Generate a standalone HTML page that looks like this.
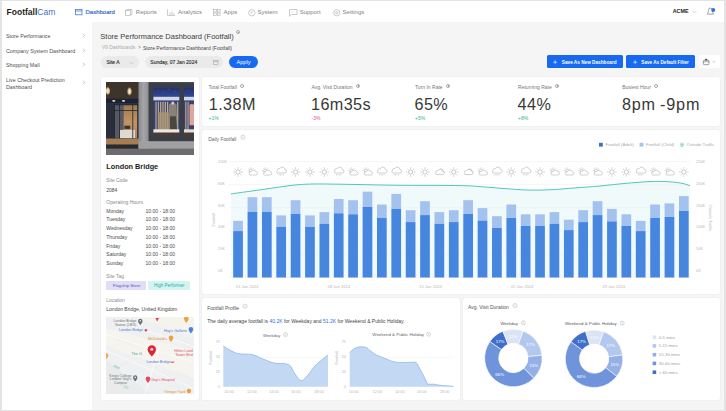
<!DOCTYPE html>
<html><head><meta charset="utf-8">
<style>
*{box-sizing:border-box;margin:0;padding:0}
html,body{width:726px;height:411px;overflow:hidden;background:#e4e4e4;font-family:"Liberation Sans",sans-serif;color:#333;position:relative}
.a{position:absolute;white-space:nowrap;line-height:1}
#mainbg{position:absolute;left:2px;top:1px;width:722px;height:409px;background:#f5f5f5}
#hdr{position:absolute;left:2px;top:1px;width:722px;height:21px;background:#fff}
#side{position:absolute;left:2px;top:22px;width:90px;height:388px;background:#fff}
.card{position:absolute;background:#fff;border-radius:2px;box-shadow:0 0 0 0.5px #ececec}
.nav{font-size:6px;color:#828282;top:8.8px}
.sb{font-size:5.3px;color:#4e4e4e;left:6px}
.lbl{font-size:5px;color:#777}
.big{font-size:16.2px;color:#383838;letter-spacing:0.4px}
.info{position:absolute;width:4.4px;height:4.4px;border:0.5px solid #aaa;border-radius:50%}
.info:after{content:"";position:absolute;left:1.25px;top:0.9px;width:0.5px;height:1.7px;background:#aaa}
.oh{font-size:5px;color:#4a4a4a}
</style></head><body>
<div id="mainbg"></div>
<div id="hdr"></div>
<div id="side"></div>

<!-- header -->
<div class="a" style="left:6.6px;top:7.9px;font-size:8.5px;font-weight:bold;color:#1e1e1e">Footfall<span style="color:#3d6fcf;font-weight:normal">Cam</span></div>
<svg class="a" style="left:74.5px;top:8.8px" width="8" height="7" viewBox="0 0 8 7"><rect x="0.5" y="0.5" width="6.5" height="5.3" fill="none" stroke="#4a7ad6" stroke-width="0.8"/><line x1="0.5" y1="2" x2="7" y2="2" stroke="#4a7ad6" stroke-width="0.8"/></svg>
<div class="a nav" style="left:85.5px;color:#3e6dd0;-webkit-text-stroke:0.2px #3e6dd0">Dashboard</div>
<svg class="a" style="left:124.5px;top:8.8px" width="8" height="7" viewBox="0 0 8 7"><rect x="0.5" y="1.5" width="5" height="5" fill="none" stroke="#aaa" stroke-width="0.6"/><path d="M2 1.5V0.5h5v5H5.5" fill="none" stroke="#aaa" stroke-width="0.6"/></svg>
<div class="a nav" style="left:135.8px">Reports</div>
<svg class="a" style="left:166.5px;top:8.8px" width="9" height="7" viewBox="0 0 9 7"><path d="M0.5 0.5V6.5H8" fill="none" stroke="#aaa" stroke-width="0.6"/><path d="M3 6V3.5M5 6V2.5M7 6V4" stroke="#aaa" stroke-width="0.6"/></svg>
<div class="a nav" style="left:177.9px">Analytics</div>
<svg class="a" style="left:212.5px;top:8.8px" width="8" height="7" viewBox="0 0 8 7"><rect x="0.5" y="0.5" width="2.8" height="2.5" fill="none" stroke="#aaa" stroke-width="0.6"/><rect x="4.3" y="0.5" width="2.8" height="2.5" fill="none" stroke="#aaa" stroke-width="0.6"/><rect x="0.5" y="4" width="2.8" height="2.5" fill="none" stroke="#aaa" stroke-width="0.6"/><rect x="4.3" y="4" width="2.8" height="2.5" fill="none" stroke="#aaa" stroke-width="0.6"/></svg>
<div class="a nav" style="left:223.6px">Apps</div>
<svg class="a" style="left:247.5px;top:8.6px" width="8" height="8" viewBox="0 0 8 8"><circle cx="3.8" cy="3.8" r="3.2" fill="none" stroke="#aaa" stroke-width="0.6"/><path d="M3.8 2v2h-1.3" fill="none" stroke="#aaa" stroke-width="0.6"/></svg>
<div class="a nav" style="left:257.5px">System</div>
<svg class="a" style="left:289px;top:8.6px" width="9" height="8" viewBox="0 0 9 8"><path d="M0.5 0.5h7.5v5h-5.5l-2 1.8z" fill="none" stroke="#aaa" stroke-width="0.6"/><path d="M2.5 3h0.6M4.5 3h0.6" stroke="#aaa" stroke-width="0.6"/></svg>
<div class="a nav" style="left:299.7px">Support</div>
<svg class="a" style="left:332.5px;top:8.6px" width="8" height="8" viewBox="0 0 8 8"><circle cx="3.8" cy="3.8" r="3.1" fill="none" stroke="#aaa" stroke-width="0.6"/><circle cx="3.8" cy="3.8" r="1.1" fill="none" stroke="#aaa" stroke-width="0.6"/></svg>
<div class="a nav" style="left:342.6px">Settings</div>
<div class="a" style="left:672.7px;top:9.1px;font-size:5.4px;font-weight:bold;color:#222">ACME</div>
<svg class="a" style="left:691.5px;top:10px" width="5" height="4" viewBox="0 0 5 4"><path d="M0.5 1l2 2 2-2" fill="none" stroke="#aaa" stroke-width="0.5"/></svg>
<svg class="a" style="left:704px;top:4px" width="14" height="14" viewBox="704 4 14 14"><path d="M707.2,14.2 h6.4 c-0.9,-0.9 -1.1,-2 -1.1,-3.6 a2.1,2.3 0 0 0 -4.2,0 c0,1.6 -0.2,2.7 -1.1,3.6 z" fill="none" stroke="#6a6a6a" stroke-width="0.6"/><path d="M709.6,7.6 v0.6" stroke="#6a6a6a" stroke-width="0.5"/><circle cx="713.2" cy="9.9" r="2" fill="#2f6fe8"/></svg>

<!-- sidebar -->
<div class="a sb" style="top:34.2px">Store Performance</div>
<div class="a sb" style="top:49px">Company System Dashboard</div>
<div class="a sb" style="top:63px">Shopping Mall</div>
<div class="a sb" style="top:77.8px">Live Checkout Prediction</div>
<div class="a sb" style="top:84.7px">Dashboard</div>
<svg class="a" style="left:82px;top:32.7px" width="4" height="5" viewBox="0 0 4 5"><path d="M1 0.8l1.7 1.7-1.7 1.7" fill="none" stroke="#888" stroke-width="0.5"/></svg>
<svg class="a" style="left:82px;top:48.2px" width="4" height="5" viewBox="0 0 4 5"><path d="M1 0.8l1.7 1.7-1.7 1.7" fill="none" stroke="#888" stroke-width="0.5"/></svg>
<svg class="a" style="left:82px;top:62.4px" width="4" height="5" viewBox="0 0 4 5"><path d="M1 0.8l1.7 1.7-1.7 1.7" fill="none" stroke="#888" stroke-width="0.5"/></svg>
<svg class="a" style="left:82px;top:80.0px" width="4" height="5" viewBox="0 0 4 5"><path d="M1 0.8l1.7 1.7-1.7 1.7" fill="none" stroke="#888" stroke-width="0.5"/></svg>



<!-- title area -->
<div class="a" style="left:100.3px;top:32.8px;font-size:7.5px;color:#3c3c3c">Store Performance Dashboard (Footfall)</div>
<div class="info" style="left:235.5px;top:30px;width:4px;height:4px"></div>
<div class="a" style="left:102px;top:45.5px;font-size:4.8px;color:#a8a8a8">V9 Dashboards</div>
<div class="a" style="left:138px;top:45.5px;font-size:4.8px;color:#666">&gt;</div>
<div class="a" style="left:143px;top:45.5px;font-size:5px;color:#444">Store Performance Dashboard (Footfall)</div>

<div class="a" style="left:100.7px;top:55.9px;width:38.2px;height:12.4px;border-radius:6px;background:#eaeaea"></div>
<div class="a" style="left:106.5px;top:59.6px;font-size:5px;color:#2a2a2a;-webkit-text-stroke:0.12px #2a2a2a">Site A</div>
<svg class="a" style="left:129px;top:60.5px" width="5" height="4" viewBox="0 0 5 4"><path d="M0.5 1l2 2 2-2" fill="none" stroke="#aaa" stroke-width="0.5"/></svg>
<div class="a" style="left:144.7px;top:55.9px;width:78.2px;height:12.4px;border-radius:6px;background:#eaeaea"></div>
<div class="a" style="left:150.3px;top:59.6px;font-size:5px;color:#2a2a2a;-webkit-text-stroke:0.12px #2a2a2a">Sunday, 07 Jan 2024</div>
<svg class="a" style="left:212.5px;top:59.5px" width="6" height="5" viewBox="0 0 6 5"><rect x="0.5" y="0.5" width="4.5" height="4" fill="none" stroke="#999" stroke-width="0.5"/><line x1="0.5" y1="1.6" x2="5" y2="1.6" stroke="#999" stroke-width="0.5"/></svg>
<div class="a" style="left:229px;top:55.9px;width:29px;height:12.4px;border-radius:6.2px;background:#1769f0"></div>
<div class="a" style="left:236.5px;top:60.2px;font-size:5.6px;color:#fff">Apply</div>

<div class="a" style="left:547px;top:55.1px;width:75.6px;height:13.4px;border-radius:1.5px;background:#1769f0"></div>
<svg class="a" style="left:553.3px;top:59.6px" width="5" height="5" viewBox="0 0 5 5"><path d="M2.2 0.2v4M0.2 2.2h4" stroke="#fff" stroke-width="0.6"/></svg>
<div class="a" style="left:561.8px;top:60.9px;font-size:4.7px;font-weight:bold;color:#fff">Save As New Dashboard</div>
<div class="a" style="left:626.4px;top:55.1px;width:68.7px;height:13.4px;border-radius:1.5px;background:#1769f0"></div>
<svg class="a" style="left:632.8px;top:59.6px" width="5" height="5" viewBox="0 0 5 5"><path d="M2.2 0.2v4M0.2 2.2h4" stroke="#fff" stroke-width="0.6"/></svg>
<div class="a" style="left:641.3px;top:60.9px;font-size:4.65px;font-weight:bold;color:#fff">Save As Default Filter</div>
<div class="a" style="left:699px;top:55.1px;width:21px;height:13.4px;border-radius:1.5px;background:#fff"></div>
<svg class="a" style="left:700px;top:57px" width="20" height="10" viewBox="700 57 20 10"><rect x="703.3" y="60.3" width="5.7" height="4.4" rx="1.1" fill="none" stroke="#555" stroke-width="0.6"/><path d="M703.4,61.8 h5.5" stroke="#555" stroke-width="0.5"/><rect x="705" y="58.8" width="2.2" height="1.4" rx="0.5" fill="#555"/><path d="M712.4 61l1.4 1.4 1.4-1.4" fill="none" stroke="#999" stroke-width="0.5"/></svg>

<!-- cards -->
<div class="card" style="left:101px;top:76.5px;width:97.5px;height:323px"></div>
<div class="card" style="left:202px;top:76.5px;width:518px;height:49.3px"></div>
<div class="card" style="left:202px;top:130px;width:518px;height:164.3px"></div>
<div class="card" style="left:202px;top:298px;width:257.8px;height:101.5px"></div>
<div class="card" style="left:462.6px;top:298px;width:257.4px;height:101.5px"></div>

<!-- MAP -->
<svg class="a" style="left:106px;top:316.6px" width="88" height="77" viewBox="106 316.6 88 77">
  <defs><clipPath id="mc"><rect x="106" y="316.6" width="88" height="77"/></clipPath></defs>
  <g clip-path="url(#mc)">
  <rect x="106" y="316.6" width="88" height="77" fill="#eff0f1"/>
  <path d="M106,328 L194,350 L194,378 L106,345 Z" fill="#f5f4ee"/>
  <path d="M135,316.6 L194,316.6 L194,338 Z" fill="#f4f3ee"/>
  <path d="M106,360 L150,393.6 L106,393.6 Z" fill="#e9ebed"/>
  <g stroke="#fdfdfd" stroke-width="0.8" fill="none">
    <path d="M106,334 L194,362"/>
    <path d="M118,321 L194,346"/>
    <path d="M106,350 L194,388"/>
    <path d="M145,393.6 L160,345"/>
  </g>
  <g stroke="#e2e4e8" stroke-width="0.4" fill="none">
    <path d="M115,338 L135,346"/><path d="M170,335 L194,345"/><path d="M176,370 L194,380"/><path d="M112,372 L130,360"/>
  </g>
  <path d="M106,352.5 a2.6,2.6 0 0 1 1.8,4.2 l-1.8,2.6 z" fill="#f0a848"/>
  <path d="M114,364 l6,3 l-1,2 l-6,-3 z" fill="#b8dcc4"/>
  <path d="M124,384 l5,2 l-1,3 l-5,-2 z" fill="#c8e4d0"/>
  <!-- labels -->
  <g font-size="3.5" fill="#70757a" text-anchor="middle">
    <text x="125" y="321.8">London Bridge</text>
    <text x="125.5" y="325.6">Station (LBG)</text>
    <text x="120.5" y="376.2">King's College</text>
    <text x="120.5" y="379.9">London Guy's</text>
    <text x="120.5" y="383.6">Campus</text>
  </g>
  <path d="M140.3,324.5 c-1.6,-2 -2.2,-3 -2.2,-4 a2.2,2.2 0 0 1 4.4,0 c0,1 -0.6,2 -2.2,4 z" fill="#6a7078"/><circle cx="140.3" cy="320.4" r="0.8" fill="#eceef0"/>
  <path d="M135.2,381 c-1.6,-2 -2.2,-3 -2.2,-4 a2.2,2.2 0 0 1 4.4,0 c0,1 -0.6,2 -2.2,4 z" fill="#6a7078"/><circle cx="135.2" cy="377" r="0.8" fill="#eceef0"/>
  <text x="131" y="331" font-size="3.7" fill="#4a78d0" text-anchor="middle">London Bridge</text>
  <circle cx="145.9" cy="329.8" r="1.3" fill="#d04a6a"/>
  <text x="158.5" y="363" font-size="3.7" fill="#4a78d0" text-anchor="middle">London Bridge</text>
  <path d="M171,361.7 h3 l-1.5,0.9 z" fill="#e05a70"/><rect x="170.8" y="361.2" width="3.4" height="1" fill="#e05a70"/>
  <text x="175.5" y="331.4" font-size="3.7" fill="#4a78d0" text-anchor="middle">Hay's Galleria</text>
  <path d="M190.9,333 c-1.7,-2 -2.3,-3 -2.3,-4.1 a2.3,2.3 0 0 1 4.6,0 c0,1.1 -0.6,2.1 -2.3,4.1 z" fill="#4a84e0"/>
  <text x="157.5" y="339.6" font-size="3.7" fill="#d8902a" text-anchor="middle">McDonald's</text>
  <path d="M171,341.5 c-1.7,-2 -2.3,-3 -2.3,-4.1 a2.3,2.3 0 0 1 4.6,0 c0,1.1 -0.6,2.1 -2.3,4.1 z" fill="#f0a040"/>
  <path d="M186.3,322.5 c-1.7,-2 -2.3,-3 -2.3,-4.1 a2.3,2.3 0 0 1 4.6,0 c0,1.1 -0.6,2.1 -2.3,4.1 z" fill="#f0a040"/>
  <path d="M155.3,317.5 l1.9,3.5 l1.9,-3.5 z" fill="#e04a5a"/>
  <text x="183.5" y="351.3" font-size="3.7" fill="#e0506a" text-anchor="middle">Hilton Land</text>
  <text x="184" y="355.2" font-size="3.7" fill="#e0506a" text-anchor="middle">Tower Brid</text>
  <text x="136.7" y="354.5" font-size="3.7" fill="#3aa890" text-anchor="middle">The G</text>
  <text x="163" y="381" font-size="3.7" fill="#e0506a" text-anchor="middle">Guy's Hospital</text>
  <path d="M148,382.5 c-1.7,-2 -2.3,-3 -2.3,-4.1 a2.3,2.3 0 0 1 4.6,0 c0,1.1 -0.6,2.1 -2.3,4.1 z" fill="#e04a5a"/>
  <text x="174.8" y="392.8" font-size="3.7" fill="#d8902a" text-anchor="middle">Vinegar Yard</text>
  <circle cx="188.9" cy="390.6" r="2.2" fill="#f0a040"/>
  <!-- main pin -->
  <path d="M151.8,356 c-3.2,-3.6 -4.2,-5.2 -4.2,-7 a4.2,4.2 0 0 1 8.4,0 c0,1.8 -1,3.4 -4.2,7 z" fill="#d8283a"/>
  <circle cx="151.8" cy="348.8" r="1.5" fill="#f2c8cc"/>
  </g>
</svg>

<!-- /MAP -->
<!-- KPIs -->
<div class="a lbl" style="left:208.5px;top:84.5px">Total Footfall</div>
<div class="info" style="left:240.3px;top:83.5px;width:4px;height:4px"></div>
<div class="a big" style="left:208.8px;top:96px">1.38M</div>
<div class="a" style="left:208.5px;top:116.2px;font-size:5px;color:#3cb58c">+1%</div>
<div class="a lbl" style="left:311.5px;top:84.5px">Avg. Visit Duration</div>
<div class="info" style="left:355.9px;top:83.5px;width:4px;height:4px"></div>
<div class="a big" style="left:311.0px;top:96px">16m35s</div>
<div class="a" style="left:311.5px;top:116.2px;font-size:5px;color:#e0557a">-3%</div>
<div class="a lbl" style="left:415px;top:84.5px">Turn In Rate</div>
<div class="info" style="left:446.1px;top:83.5px;width:4px;height:4px"></div>
<div class="a big" style="left:414.5px;top:96px">65%</div>
<div class="a" style="left:415px;top:116.2px;font-size:5px;color:#3cb58c">+5%</div>
<div class="a lbl" style="left:518.1px;top:84.5px">Returning Rate</div>
<div class="info" style="left:555.2px;top:83.5px;width:4px;height:4px"></div>
<div class="a big" style="left:517.6px;top:96px">44%</div>
<div class="a" style="left:518.1px;top:116.2px;font-size:5px;color:#3cb58c">+8%</div>
<div class="a lbl" style="left:622.2px;top:84.5px">Busiest Hour</div>
<div class="info" style="left:654.3px;top:83.5px;width:4px;height:4px"></div>
<div class="a big" style="left:621.9px;top:96px;letter-spacing:0.85px;word-spacing:-1.3px">8pm -9pm</div>

<!-- store card -->
<div class="a" style="left:106px;top:81.7px;width:88px;height:73px;overflow:hidden"><svg style="position:absolute;left:0;top:0;filter:blur(0.3px)" width="88" height="73" viewBox="106 81.7 88 73">
  <defs>
    <linearGradient id="wtop" x1="0" y1="0" x2="0" y2="1"><stop offset="0" stop-color="#24326a"/><stop offset="1" stop-color="#34489a"/></linearGradient>
    <linearGradient id="stone" x1="0" y1="0" x2="1" y2="0"><stop offset="0" stop-color="#8a8a8c"/><stop offset="0.5" stop-color="#a6a6a8"/><stop offset="1" stop-color="#8e8e90"/></linearGradient>
    <radialGradient id="lamp"><stop offset="0" stop-color="#fff6dc"/><stop offset="0.55" stop-color="#d8bc8c"/><stop offset="1" stop-color="#3f362c" stop-opacity="0"/></radialGradient>
    <linearGradient id="gold" x1="0" y1="0" x2="0" y2="1"><stop offset="0" stop-color="#a07a50"/><stop offset="0.5" stop-color="#c09464"/><stop offset="1" stop-color="#b08660"/></linearGradient>
  </defs>
  <rect x="106" y="81.7" width="88" height="73" fill="#7a7a7a"/>
  <!-- left store -->
  <rect x="106" y="81.7" width="33" height="17" fill="#3d342b"/>
  <ellipse cx="107.8" cy="90.6" rx="3" ry="5" fill="url(#lamp)"/>
  <ellipse cx="129.5" cy="91.1" rx="3" ry="5" fill="url(#lamp)"/>
  <rect x="106" y="98.5" width="33" height="5" fill="#1c2236"/>
  <ellipse cx="113.8" cy="100.6" rx="1.6" ry="0.8" fill="#f2ecd8"/>
  <ellipse cx="123.5" cy="100.6" rx="1.6" ry="0.8" fill="#f2ecd8"/>
  <rect x="106" y="103.5" width="33" height="35" fill="#2a2e3a"/>
  <rect x="114.5" y="105" width="9" height="33" fill="#565a64"/>
  <rect x="123.5" y="105" width="14.5" height="33" fill="url(#gold)"/>
  <rect x="120" y="129.6" width="15" height="8.2" fill="#dedad2"/>
  <rect x="124.4" y="125.4" width="5.8" height="3.2" fill="#3a3430"/>
  <g fill="#25262c">
    <rect x="114" y="103.5" width="0.9" height="41"/>
    <rect x="119.2" y="103.5" width="0.8" height="41"/>
    <rect x="132.4" y="103.5" width="0.8" height="41"/>
    <rect x="137.2" y="103.5" width="0.8" height="41"/>
    <rect x="114" y="109.8" width="24" height="0.8"/>
  </g>
  <rect x="106" y="138.3" width="33" height="6" fill="#a67c52"/>
  <rect x="106" y="144.2" width="33" height="4.3" fill="#2a2a2e"/>
  <!-- pillar -->
  <rect x="138.5" y="81.7" width="10.2" height="67" fill="url(#stone)"/>
  <!-- window frame -->
  <rect x="148.6" y="82" width="45.4" height="59" fill="#3a3e47"/>
  <rect x="153.4" y="87.4" width="25.9" height="49.1" fill="#3a4274"/>
  <rect x="184" y="87.4" width="10" height="49.1" fill="#3a4274"/>
  <rect x="153.4" y="87.4" width="25.9" height="9.1" fill="url(#wtop)"/>
  <rect x="184" y="87.4" width="10" height="9.1" fill="url(#wtop)"/>
  <g fill="#c8d0f0" opacity="0.8"><circle cx="158" cy="90" r="0.3"/><circle cx="163" cy="92" r="0.3"/><circle cx="169" cy="89.5" r="0.3"/><circle cx="175" cy="91.5" r="0.3"/><circle cx="188" cy="90.5" r="0.3"/></g>
  <rect x="153.4" y="96.5" width="25.9" height="3.6" fill="#d2d8e8"/>
  <rect x="184" y="96.5" width="10" height="3.6" fill="#d2d8e8"/>
  <g fill="#c4b290">
    <rect x="155.5" y="101.5" width="1.1" height="28"/><rect x="157.8" y="101.5" width="1.1" height="28"/><rect x="160.1" y="101.5" width="1.2" height="28"/><rect x="162.4" y="101.5" width="1.2" height="28"/><rect x="164.7" y="101.5" width="1.2" height="28"/><rect x="167" y="101.5" width="1.2" height="28"/><rect x="177.2" y="101.5" width="1.1" height="28"/>
    <rect x="185.3" y="101.5" width="1.1" height="28"/><rect x="187.5" y="101.5" width="1.1" height="28"/>
  </g>
  <path d="M158,112 h12 v17.5 h-12 z" fill="#a89474" opacity="0.85"/>
  <path d="M169,104 q3.5,-2.5 7.5,0 l0.5,12 l-1,13.5 h-6 l-1.5,-13.5 z" fill="#8a8278"/>
  <rect x="170" y="116" width="6" height="13.5" fill="#4a4640"/>
  <ellipse cx="172.8" cy="102.8" rx="1.5" ry="1.6" fill="#d8d0c8"/>
  <path d="M189.5,104.4 q2.5,-1.5 4.5,0 v20.5 h-4.5 z" fill="#e0a49c"/>
  <rect x="153.4" y="129" width="25.9" height="3.4" fill="#eee8e0"/>
  <rect x="184" y="129" width="10" height="3.4" fill="#e6ded4"/>
  <rect x="153.4" y="132.4" width="25.9" height="4.1" fill="#4a3c32"/>
  <rect x="184" y="132.4" width="10" height="4.1" fill="#4a3c32"/>
  <!-- base stone -->
  <rect x="138.5" y="141" width="55.5" height="7.5" fill="#a0a0a2"/>
  <rect x="106" y="148.5" width="88" height="6.2" fill="#6c6c6e"/>
</svg></div>
<div class="a" style="left:106.3px;top:163.1px;font-size:7.3px;font-weight:bold;color:#1e1e1e">London Bridge</div>
<div class="a" style="left:106.3px;top:179.2px;font-size:4.9px;color:#8a8a8a">Site Code</div>
<div class="a" style="left:106.3px;top:188.6px;font-size:4.9px;color:#444">2084</div>
<div class="a" style="left:106.3px;top:199.5px;font-size:5px;color:#8a8a8a">Operating Hours</div>
<div class="a oh" style="left:106.3px;top:208.5px">Monday</div><div class="a oh" style="left:145.5px;top:208.5px">10:00 - 18:00</div>
<div class="a oh" style="left:106.3px;top:217.3px">Tuesday</div><div class="a oh" style="left:145.5px;top:217.3px">10:00 - 18:00</div>
<div class="a oh" style="left:106.3px;top:226.0px">Wednesday</div><div class="a oh" style="left:145.5px;top:226.0px">10:00 - 18:00</div>
<div class="a oh" style="left:106.3px;top:234.8px">Thursday</div><div class="a oh" style="left:145.5px;top:234.8px">10:00 - 18:00</div>
<div class="a oh" style="left:106.3px;top:243.6px">Friday</div><div class="a oh" style="left:145.5px;top:243.6px">10:00 - 18:00</div>
<div class="a oh" style="left:106.3px;top:252.3px">Saturday</div><div class="a oh" style="left:145.5px;top:252.3px">10:00 - 18:00</div>
<div class="a oh" style="left:106.3px;top:261.1px">Sunday</div><div class="a oh" style="left:145.5px;top:261.1px">10:00 - 18:00</div>
<div class="a" style="left:106.3px;top:274.6px;font-size:4.9px;color:#8a8a8a">Site Tag</div>
<div class="a" style="left:106.1px;top:281.1px;width:40px;height:8.7px;border-radius:1px;background:#e0def5"></div>
<div class="a" style="left:112.8px;top:284px;font-size:4.3px;color:#5656c8">Flagship Store</div>
<div class="a" style="left:148.2px;top:281.1px;width:42.3px;height:8.7px;border-radius:1px;background:#d4f4f1"></div>
<div class="a" style="left:154px;top:284px;font-size:4.5px;color:#2aae9f">High Performer</div>
<div class="a" style="left:106.3px;top:298.5px;font-size:4.9px;color:#8a8a8a">Location</div>
<div class="a" style="left:106.3px;top:306.5px;font-size:5px;color:#444">London Bridge, United Kingdom</div>

<!-- DAILY -->
<svg class="a" style="left:0;top:0" width="726" height="411" viewBox="0 0 726 411">
<path d="M231,193.9 C234.5,193.4 245.2,191.9 252,191 C258.8,190.1 265.1,189.1 271.8,188.2 C278.5,187.2 285.3,186.0 292,185.3 C298.7,184.6 304.0,184.2 312,184 C320.0,183.8 330.3,184.1 340,184.2 C349.7,184.3 359.7,184.6 370,184.8 C380.3,185.0 390.3,185.2 402,185.3 C413.7,185.4 428.7,185.3 440,185.4 C451.3,185.5 460.0,185.4 470,185.9 C480.0,186.4 490.3,187.5 500,188.2 C509.7,188.9 519.3,189.8 528,190.1 C536.7,190.3 544.3,190.0 552,189.7 C559.7,189.3 566.0,188.6 574,188 C582.0,187.4 591.5,186.8 600,186 C608.5,185.2 616.7,184.1 625,183.4 C633.3,182.7 642.8,181.9 650,181.6 C657.2,181.3 662.7,181.4 668,181.7 C673.3,182.0 678.3,182.6 682,183.3 C685.7,184.0 688.7,185.4 690,185.8 L690,277.5 L231,277.5 Z" fill="#f0fafb"/>
<line x1="229" y1="277.5" x2="691" y2="277.5" stroke="#ececec" stroke-width="0.5"/>
<line x1="229" y1="254.3" x2="691" y2="254.3" stroke="#ececec" stroke-width="0.5"/>
<line x1="229" y1="231.1" x2="691" y2="231.1" stroke="#ececec" stroke-width="0.5"/>
<line x1="229" y1="207.9" x2="691" y2="207.9" stroke="#ececec" stroke-width="0.5"/>
<line x1="229" y1="184.7" x2="691" y2="184.7" stroke="#ececec" stroke-width="0.5"/>
<line x1="229" y1="161.5" x2="691" y2="161.5" stroke="#ececec" stroke-width="0.5"/>
<rect x="233.20" y="220.9" width="9.7" height="10.2" fill="#a4c2ee"/>
<rect x="233.20" y="231.1" width="9.7" height="46.4" fill="#4686de"/>
<rect x="247.58" y="197.2" width="9.7" height="14.7" fill="#a4c2ee"/>
<rect x="247.58" y="211.9" width="9.7" height="65.6" fill="#4686de"/>
<rect x="261.96" y="197.2" width="9.7" height="14.7" fill="#a4c2ee"/>
<rect x="261.96" y="211.9" width="9.7" height="65.6" fill="#4686de"/>
<rect x="276.34" y="215.4" width="9.7" height="11.4" fill="#a4c2ee"/>
<rect x="276.34" y="226.8" width="9.7" height="50.7" fill="#4686de"/>
<rect x="290.72" y="200.2" width="9.7" height="13.8" fill="#a4c2ee"/>
<rect x="290.72" y="214.0" width="9.7" height="63.5" fill="#4686de"/>
<rect x="305.10" y="215.4" width="9.7" height="11.4" fill="#a4c2ee"/>
<rect x="305.10" y="226.8" width="9.7" height="50.7" fill="#4686de"/>
<rect x="319.48" y="212.1" width="9.7" height="11.7" fill="#a4c2ee"/>
<rect x="319.48" y="223.8" width="9.7" height="53.7" fill="#4686de"/>
<rect x="333.86" y="199.0" width="9.7" height="14.3" fill="#a4c2ee"/>
<rect x="333.86" y="213.3" width="9.7" height="64.2" fill="#4686de"/>
<rect x="348.24" y="200.2" width="9.7" height="14.1" fill="#a4c2ee"/>
<rect x="348.24" y="214.3" width="9.7" height="63.2" fill="#4686de"/>
<rect x="362.62" y="191.7" width="9.7" height="15.3" fill="#a4c2ee"/>
<rect x="362.62" y="207.0" width="9.7" height="70.5" fill="#4686de"/>
<rect x="377.00" y="204.5" width="9.7" height="13.5" fill="#a4c2ee"/>
<rect x="377.00" y="218.0" width="9.7" height="59.5" fill="#4686de"/>
<rect x="391.38" y="193.9" width="9.7" height="15.0" fill="#a4c2ee"/>
<rect x="391.38" y="208.9" width="9.7" height="68.6" fill="#4686de"/>
<rect x="405.76" y="210.2" width="9.7" height="11.9" fill="#a4c2ee"/>
<rect x="405.76" y="222.1" width="9.7" height="55.4" fill="#4686de"/>
<rect x="420.14" y="201.2" width="9.7" height="13.9" fill="#a4c2ee"/>
<rect x="420.14" y="215.1" width="9.7" height="62.4" fill="#4686de"/>
<rect x="434.52" y="212.1" width="9.7" height="11.7" fill="#a4c2ee"/>
<rect x="434.52" y="223.8" width="9.7" height="53.7" fill="#4686de"/>
<rect x="448.90" y="210.2" width="9.7" height="11.9" fill="#a4c2ee"/>
<rect x="448.90" y="222.1" width="9.7" height="55.4" fill="#4686de"/>
<rect x="463.28" y="200.2" width="9.7" height="13.8" fill="#a4c2ee"/>
<rect x="463.28" y="214.0" width="9.7" height="63.5" fill="#4686de"/>
<rect x="477.66" y="208.1" width="9.7" height="12.5" fill="#a4c2ee"/>
<rect x="477.66" y="220.6" width="9.7" height="56.9" fill="#4686de"/>
<rect x="492.04" y="216.2" width="9.7" height="11.7" fill="#a4c2ee"/>
<rect x="492.04" y="227.9" width="9.7" height="49.6" fill="#4686de"/>
<rect x="506.42" y="204.5" width="9.7" height="13.5" fill="#a4c2ee"/>
<rect x="506.42" y="218.0" width="9.7" height="59.5" fill="#4686de"/>
<rect x="520.80" y="214.3" width="9.7" height="11.7" fill="#a4c2ee"/>
<rect x="520.80" y="226.0" width="9.7" height="51.5" fill="#4686de"/>
<rect x="535.18" y="214.3" width="9.7" height="11.7" fill="#a4c2ee"/>
<rect x="535.18" y="226.0" width="9.7" height="51.5" fill="#4686de"/>
<rect x="549.56" y="212.1" width="9.7" height="11.7" fill="#a4c2ee"/>
<rect x="549.56" y="223.8" width="9.7" height="53.7" fill="#4686de"/>
<rect x="563.94" y="219.7" width="9.7" height="10.4" fill="#a4c2ee"/>
<rect x="563.94" y="230.1" width="9.7" height="47.4" fill="#4686de"/>
<rect x="578.32" y="210.2" width="9.7" height="11.9" fill="#a4c2ee"/>
<rect x="578.32" y="222.1" width="9.7" height="55.4" fill="#4686de"/>
<rect x="592.70" y="201.2" width="9.7" height="13.9" fill="#a4c2ee"/>
<rect x="592.70" y="215.1" width="9.7" height="62.4" fill="#4686de"/>
<rect x="607.08" y="208.9" width="9.7" height="12.5" fill="#a4c2ee"/>
<rect x="607.08" y="221.4" width="9.7" height="56.1" fill="#4686de"/>
<rect x="621.46" y="214.3" width="9.7" height="11.7" fill="#a4c2ee"/>
<rect x="621.46" y="226.0" width="9.7" height="51.5" fill="#4686de"/>
<rect x="635.84" y="220.9" width="9.7" height="10.2" fill="#a4c2ee"/>
<rect x="635.84" y="231.1" width="9.7" height="46.4" fill="#4686de"/>
<rect x="650.22" y="204.5" width="9.7" height="13.5" fill="#a4c2ee"/>
<rect x="650.22" y="218.0" width="9.7" height="59.5" fill="#4686de"/>
<rect x="664.60" y="203.4" width="9.7" height="13.6" fill="#a4c2ee"/>
<rect x="664.60" y="217.0" width="9.7" height="60.5" fill="#4686de"/>
<rect x="678.98" y="196.1" width="9.7" height="14.9" fill="#a4c2ee"/>
<rect x="678.98" y="211.0" width="9.7" height="66.5" fill="#4686de"/>
<path d="M231,193.9 C234.5,193.4 245.2,191.9 252,191 C258.8,190.1 265.1,189.1 271.8,188.2 C278.5,187.2 285.3,186.0 292,185.3 C298.7,184.6 304.0,184.2 312,184 C320.0,183.8 330.3,184.1 340,184.2 C349.7,184.3 359.7,184.6 370,184.8 C380.3,185.0 390.3,185.2 402,185.3 C413.7,185.4 428.7,185.3 440,185.4 C451.3,185.5 460.0,185.4 470,185.9 C480.0,186.4 490.3,187.5 500,188.2 C509.7,188.9 519.3,189.8 528,190.1 C536.7,190.3 544.3,190.0 552,189.7 C559.7,189.3 566.0,188.6 574,188 C582.0,187.4 591.5,186.8 600,186 C608.5,185.2 616.7,184.1 625,183.4 C633.3,182.7 642.8,181.9 650,181.6 C657.2,181.3 662.7,181.4 668,181.7 C673.3,182.0 678.3,182.6 682,183.3 C685.7,184.0 688.7,185.4 690,185.8" fill="none" stroke="#3fc0b4" stroke-width="0.9"/>
<circle cx="238.05" cy="172" r="2.1" fill="none" stroke="#a0a0a0" stroke-width="0.55"/><line x1="241.15" y1="172.00" x2="242.85" y2="172.00" stroke="#a0a0a0" stroke-width="0.5"/><line x1="240.24" y1="174.19" x2="241.44" y2="175.39" stroke="#a0a0a0" stroke-width="0.5"/><line x1="238.05" y1="175.10" x2="238.05" y2="176.80" stroke="#a0a0a0" stroke-width="0.5"/><line x1="235.86" y1="174.19" x2="234.66" y2="175.39" stroke="#a0a0a0" stroke-width="0.5"/><line x1="234.95" y1="172.00" x2="233.25" y2="172.00" stroke="#a0a0a0" stroke-width="0.5"/><line x1="235.86" y1="169.81" x2="234.66" y2="168.61" stroke="#a0a0a0" stroke-width="0.5"/><line x1="238.05" y1="168.90" x2="238.05" y2="167.20" stroke="#a0a0a0" stroke-width="0.5"/><line x1="240.24" y1="169.81" x2="241.44" y2="168.61" stroke="#a0a0a0" stroke-width="0.5"/>
<circle cx="250.83" cy="170.7" r="1.6" fill="none" stroke="#a0a0a0" stroke-width="0.5"/><line x1="253.13" y1="170.70" x2="254.13" y2="170.70" stroke="#a0a0a0" stroke-width="0.45"/><line x1="252.46" y1="172.33" x2="253.16" y2="173.03" stroke="#a0a0a0" stroke-width="0.45"/><line x1="250.83" y1="173.00" x2="250.83" y2="174.00" stroke="#a0a0a0" stroke-width="0.45"/><line x1="249.20" y1="172.33" x2="248.50" y2="173.03" stroke="#a0a0a0" stroke-width="0.45"/><line x1="248.53" y1="170.70" x2="247.53" y2="170.70" stroke="#a0a0a0" stroke-width="0.45"/><line x1="249.20" y1="169.07" x2="248.50" y2="168.37" stroke="#a0a0a0" stroke-width="0.45"/><line x1="250.83" y1="168.40" x2="250.83" y2="167.40" stroke="#a0a0a0" stroke-width="0.45"/><line x1="252.46" y1="169.07" x2="253.16" y2="168.37" stroke="#a0a0a0" stroke-width="0.45"/><path d="M249.83,175 h6 a1.6,1.6 0 0 0 0.1,-3.2 a2.3,2.3 0 0 0 -4.3,-0.5 a1.6,1.6 0 0 0 -1.9,2 a0.9,0.9 0 0 0 0.1,1.7 z" fill="#fff" stroke="#a0a0a0" stroke-width="0.5"/>
<circle cx="265.21" cy="170.7" r="1.6" fill="none" stroke="#a0a0a0" stroke-width="0.5"/><line x1="267.51" y1="170.70" x2="268.51" y2="170.70" stroke="#a0a0a0" stroke-width="0.45"/><line x1="266.84" y1="172.33" x2="267.54" y2="173.03" stroke="#a0a0a0" stroke-width="0.45"/><line x1="265.21" y1="173.00" x2="265.21" y2="174.00" stroke="#a0a0a0" stroke-width="0.45"/><line x1="263.58" y1="172.33" x2="262.88" y2="173.03" stroke="#a0a0a0" stroke-width="0.45"/><line x1="262.91" y1="170.70" x2="261.91" y2="170.70" stroke="#a0a0a0" stroke-width="0.45"/><line x1="263.58" y1="169.07" x2="262.88" y2="168.37" stroke="#a0a0a0" stroke-width="0.45"/><line x1="265.21" y1="168.40" x2="265.21" y2="167.40" stroke="#a0a0a0" stroke-width="0.45"/><line x1="266.84" y1="169.07" x2="267.54" y2="168.37" stroke="#a0a0a0" stroke-width="0.45"/><path d="M264.21,175 h6 a1.6,1.6 0 0 0 0.1,-3.2 a2.3,2.3 0 0 0 -4.3,-0.5 a1.6,1.6 0 0 0 -1.9,2 a0.9,0.9 0 0 0 0.1,1.7 z" fill="#fff" stroke="#a0a0a0" stroke-width="0.5"/>
<path d="M277.59,173 h7 a1.8,1.8 0 0 0 0.2,-3.6 a2.6,2.6 0 0 0 -4.9,-0.9 a1.9,1.9 0 0 0 -2.5,2.4 a1.1,1.1 0 0 0 0.2,2.1 z" fill="none" stroke="#a0a0a0" stroke-width="0.5"/><line x1="278.99" y1="174.4" x2="278.99" y2="175.3" stroke="#a0a0a0" stroke-width="0.6"/><line x1="280.49" y1="174.4" x2="280.49" y2="175.3" stroke="#a0a0a0" stroke-width="0.6"/><line x1="281.99" y1="174.4" x2="281.99" y2="175.3" stroke="#a0a0a0" stroke-width="0.6"/><line x1="283.49" y1="174.4" x2="283.49" y2="175.3" stroke="#a0a0a0" stroke-width="0.6"/>
<circle cx="295.57" cy="172" r="2.1" fill="none" stroke="#a0a0a0" stroke-width="0.55"/><line x1="298.67" y1="172.00" x2="300.37" y2="172.00" stroke="#a0a0a0" stroke-width="0.5"/><line x1="297.76" y1="174.19" x2="298.96" y2="175.39" stroke="#a0a0a0" stroke-width="0.5"/><line x1="295.57" y1="175.10" x2="295.57" y2="176.80" stroke="#a0a0a0" stroke-width="0.5"/><line x1="293.38" y1="174.19" x2="292.18" y2="175.39" stroke="#a0a0a0" stroke-width="0.5"/><line x1="292.47" y1="172.00" x2="290.77" y2="172.00" stroke="#a0a0a0" stroke-width="0.5"/><line x1="293.38" y1="169.81" x2="292.18" y2="168.61" stroke="#a0a0a0" stroke-width="0.5"/><line x1="295.57" y1="168.90" x2="295.57" y2="167.20" stroke="#a0a0a0" stroke-width="0.5"/><line x1="297.76" y1="169.81" x2="298.96" y2="168.61" stroke="#a0a0a0" stroke-width="0.5"/>
<circle cx="309.95" cy="172" r="2.1" fill="none" stroke="#a0a0a0" stroke-width="0.55"/><line x1="313.05" y1="172.00" x2="314.75" y2="172.00" stroke="#a0a0a0" stroke-width="0.5"/><line x1="312.14" y1="174.19" x2="313.34" y2="175.39" stroke="#a0a0a0" stroke-width="0.5"/><line x1="309.95" y1="175.10" x2="309.95" y2="176.80" stroke="#a0a0a0" stroke-width="0.5"/><line x1="307.76" y1="174.19" x2="306.56" y2="175.39" stroke="#a0a0a0" stroke-width="0.5"/><line x1="306.85" y1="172.00" x2="305.15" y2="172.00" stroke="#a0a0a0" stroke-width="0.5"/><line x1="307.76" y1="169.81" x2="306.56" y2="168.61" stroke="#a0a0a0" stroke-width="0.5"/><line x1="309.95" y1="168.90" x2="309.95" y2="167.20" stroke="#a0a0a0" stroke-width="0.5"/><line x1="312.14" y1="169.81" x2="313.34" y2="168.61" stroke="#a0a0a0" stroke-width="0.5"/>
<circle cx="324.33" cy="172" r="2.1" fill="none" stroke="#a0a0a0" stroke-width="0.55"/><line x1="327.43" y1="172.00" x2="329.13" y2="172.00" stroke="#a0a0a0" stroke-width="0.5"/><line x1="326.52" y1="174.19" x2="327.72" y2="175.39" stroke="#a0a0a0" stroke-width="0.5"/><line x1="324.33" y1="175.10" x2="324.33" y2="176.80" stroke="#a0a0a0" stroke-width="0.5"/><line x1="322.14" y1="174.19" x2="320.94" y2="175.39" stroke="#a0a0a0" stroke-width="0.5"/><line x1="321.23" y1="172.00" x2="319.53" y2="172.00" stroke="#a0a0a0" stroke-width="0.5"/><line x1="322.14" y1="169.81" x2="320.94" y2="168.61" stroke="#a0a0a0" stroke-width="0.5"/><line x1="324.33" y1="168.90" x2="324.33" y2="167.20" stroke="#a0a0a0" stroke-width="0.5"/><line x1="326.52" y1="169.81" x2="327.72" y2="168.61" stroke="#a0a0a0" stroke-width="0.5"/>
<path d="M335.10999999999996,173 h7 a1.8,1.8 0 0 0 0.2,-3.6 a2.6,2.6 0 0 0 -4.9,-0.9 a1.9,1.9 0 0 0 -2.5,2.4 a1.1,1.1 0 0 0 0.2,2.1 z" fill="none" stroke="#a0a0a0" stroke-width="0.5"/><line x1="336.51" y1="174.4" x2="336.51" y2="175.3" stroke="#a0a0a0" stroke-width="0.6"/><line x1="338.01" y1="174.4" x2="338.01" y2="175.3" stroke="#a0a0a0" stroke-width="0.6"/><line x1="339.51" y1="174.4" x2="339.51" y2="175.3" stroke="#a0a0a0" stroke-width="0.6"/><line x1="341.01" y1="174.4" x2="341.01" y2="175.3" stroke="#a0a0a0" stroke-width="0.6"/>
<circle cx="351.48999999999995" cy="170.7" r="1.6" fill="none" stroke="#a0a0a0" stroke-width="0.5"/><line x1="353.79" y1="170.70" x2="354.79" y2="170.70" stroke="#a0a0a0" stroke-width="0.45"/><line x1="353.12" y1="172.33" x2="353.82" y2="173.03" stroke="#a0a0a0" stroke-width="0.45"/><line x1="351.49" y1="173.00" x2="351.49" y2="174.00" stroke="#a0a0a0" stroke-width="0.45"/><line x1="349.86" y1="172.33" x2="349.16" y2="173.03" stroke="#a0a0a0" stroke-width="0.45"/><line x1="349.19" y1="170.70" x2="348.19" y2="170.70" stroke="#a0a0a0" stroke-width="0.45"/><line x1="349.86" y1="169.07" x2="349.16" y2="168.37" stroke="#a0a0a0" stroke-width="0.45"/><line x1="351.49" y1="168.40" x2="351.49" y2="167.40" stroke="#a0a0a0" stroke-width="0.45"/><line x1="353.12" y1="169.07" x2="353.82" y2="168.37" stroke="#a0a0a0" stroke-width="0.45"/><path d="M350.48999999999995,175 h6 a1.6,1.6 0 0 0 0.1,-3.2 a2.3,2.3 0 0 0 -4.3,-0.5 a1.6,1.6 0 0 0 -1.9,2 a0.9,0.9 0 0 0 0.1,1.7 z" fill="#fff" stroke="#a0a0a0" stroke-width="0.5"/>
<circle cx="365.87" cy="170.7" r="1.6" fill="none" stroke="#a0a0a0" stroke-width="0.5"/><line x1="368.17" y1="170.70" x2="369.17" y2="170.70" stroke="#a0a0a0" stroke-width="0.45"/><line x1="367.50" y1="172.33" x2="368.20" y2="173.03" stroke="#a0a0a0" stroke-width="0.45"/><line x1="365.87" y1="173.00" x2="365.87" y2="174.00" stroke="#a0a0a0" stroke-width="0.45"/><line x1="364.24" y1="172.33" x2="363.54" y2="173.03" stroke="#a0a0a0" stroke-width="0.45"/><line x1="363.57" y1="170.70" x2="362.57" y2="170.70" stroke="#a0a0a0" stroke-width="0.45"/><line x1="364.24" y1="169.07" x2="363.54" y2="168.37" stroke="#a0a0a0" stroke-width="0.45"/><line x1="365.87" y1="168.40" x2="365.87" y2="167.40" stroke="#a0a0a0" stroke-width="0.45"/><line x1="367.50" y1="169.07" x2="368.20" y2="168.37" stroke="#a0a0a0" stroke-width="0.45"/><path d="M364.87,175 h6 a1.6,1.6 0 0 0 0.1,-3.2 a2.3,2.3 0 0 0 -4.3,-0.5 a1.6,1.6 0 0 0 -1.9,2 a0.9,0.9 0 0 0 0.1,1.7 z" fill="#fff" stroke="#a0a0a0" stroke-width="0.5"/>
<path d="M378.25,173 h7 a1.8,1.8 0 0 0 0.2,-3.6 a2.6,2.6 0 0 0 -4.9,-0.9 a1.9,1.9 0 0 0 -2.5,2.4 a1.1,1.1 0 0 0 0.2,2.1 z" fill="none" stroke="#a0a0a0" stroke-width="0.5"/><line x1="379.65000000000003" y1="174.4" x2="379.65000000000003" y2="175.3" stroke="#a0a0a0" stroke-width="0.6"/><line x1="381.15000000000003" y1="174.4" x2="381.15000000000003" y2="175.3" stroke="#a0a0a0" stroke-width="0.6"/><line x1="382.65000000000003" y1="174.4" x2="382.65000000000003" y2="175.3" stroke="#a0a0a0" stroke-width="0.6"/><line x1="384.15000000000003" y1="174.4" x2="384.15000000000003" y2="175.3" stroke="#a0a0a0" stroke-width="0.6"/>
<path d="M392.63,173 h7 a1.8,1.8 0 0 0 0.2,-3.6 a2.6,2.6 0 0 0 -4.9,-0.9 a1.9,1.9 0 0 0 -2.5,2.4 a1.1,1.1 0 0 0 0.2,2.1 z" fill="none" stroke="#a0a0a0" stroke-width="0.5"/><line x1="394.03000000000003" y1="174.4" x2="394.03000000000003" y2="175.3" stroke="#a0a0a0" stroke-width="0.6"/><line x1="395.53000000000003" y1="174.4" x2="395.53000000000003" y2="175.3" stroke="#a0a0a0" stroke-width="0.6"/><line x1="397.03000000000003" y1="174.4" x2="397.03000000000003" y2="175.3" stroke="#a0a0a0" stroke-width="0.6"/><line x1="398.53000000000003" y1="174.4" x2="398.53000000000003" y2="175.3" stroke="#a0a0a0" stroke-width="0.6"/>
<circle cx="410.61" cy="172" r="2.1" fill="none" stroke="#a0a0a0" stroke-width="0.55"/><line x1="413.71" y1="172.00" x2="415.41" y2="172.00" stroke="#a0a0a0" stroke-width="0.5"/><line x1="412.80" y1="174.19" x2="414.00" y2="175.39" stroke="#a0a0a0" stroke-width="0.5"/><line x1="410.61" y1="175.10" x2="410.61" y2="176.80" stroke="#a0a0a0" stroke-width="0.5"/><line x1="408.42" y1="174.19" x2="407.22" y2="175.39" stroke="#a0a0a0" stroke-width="0.5"/><line x1="407.51" y1="172.00" x2="405.81" y2="172.00" stroke="#a0a0a0" stroke-width="0.5"/><line x1="408.42" y1="169.81" x2="407.22" y2="168.61" stroke="#a0a0a0" stroke-width="0.5"/><line x1="410.61" y1="168.90" x2="410.61" y2="167.20" stroke="#a0a0a0" stroke-width="0.5"/><line x1="412.80" y1="169.81" x2="414.00" y2="168.61" stroke="#a0a0a0" stroke-width="0.5"/>
<circle cx="424.99" cy="172" r="2.1" fill="none" stroke="#a0a0a0" stroke-width="0.55"/><line x1="428.09" y1="172.00" x2="429.79" y2="172.00" stroke="#a0a0a0" stroke-width="0.5"/><line x1="427.18" y1="174.19" x2="428.38" y2="175.39" stroke="#a0a0a0" stroke-width="0.5"/><line x1="424.99" y1="175.10" x2="424.99" y2="176.80" stroke="#a0a0a0" stroke-width="0.5"/><line x1="422.80" y1="174.19" x2="421.60" y2="175.39" stroke="#a0a0a0" stroke-width="0.5"/><line x1="421.89" y1="172.00" x2="420.19" y2="172.00" stroke="#a0a0a0" stroke-width="0.5"/><line x1="422.80" y1="169.81" x2="421.60" y2="168.61" stroke="#a0a0a0" stroke-width="0.5"/><line x1="424.99" y1="168.90" x2="424.99" y2="167.20" stroke="#a0a0a0" stroke-width="0.5"/><line x1="427.18" y1="169.81" x2="428.38" y2="168.61" stroke="#a0a0a0" stroke-width="0.5"/>
<path d="M439.37,170.5 a1.8,1.8 0 0 1 3.6,0.3 a1.4,1.4 0 0 1 0.4,2.6" fill="none" stroke="#a0a0a0" stroke-width="0.45"/><path d="M436.37,174.6 h6.2 a1.7,1.7 0 0 0 0.1,-3.4 a2.5,2.5 0 0 0 -4.6,-0.7 a1.8,1.8 0 0 0 -2.2,2.3 a1,1 0 0 0 0.5,1.8 z" fill="#fff" stroke="#a0a0a0" stroke-width="0.5"/>
<circle cx="453.75" cy="172" r="2.1" fill="none" stroke="#a0a0a0" stroke-width="0.55"/><line x1="456.85" y1="172.00" x2="458.55" y2="172.00" stroke="#a0a0a0" stroke-width="0.5"/><line x1="455.94" y1="174.19" x2="457.14" y2="175.39" stroke="#a0a0a0" stroke-width="0.5"/><line x1="453.75" y1="175.10" x2="453.75" y2="176.80" stroke="#a0a0a0" stroke-width="0.5"/><line x1="451.56" y1="174.19" x2="450.36" y2="175.39" stroke="#a0a0a0" stroke-width="0.5"/><line x1="450.65" y1="172.00" x2="448.95" y2="172.00" stroke="#a0a0a0" stroke-width="0.5"/><line x1="451.56" y1="169.81" x2="450.36" y2="168.61" stroke="#a0a0a0" stroke-width="0.5"/><line x1="453.75" y1="168.90" x2="453.75" y2="167.20" stroke="#a0a0a0" stroke-width="0.5"/><line x1="455.94" y1="169.81" x2="457.14" y2="168.61" stroke="#a0a0a0" stroke-width="0.5"/>
<path d="M468.13,170.5 a1.8,1.8 0 0 1 3.6,0.3 a1.4,1.4 0 0 1 0.4,2.6" fill="none" stroke="#a0a0a0" stroke-width="0.45"/><path d="M465.13,174.6 h6.2 a1.7,1.7 0 0 0 0.1,-3.4 a2.5,2.5 0 0 0 -4.6,-0.7 a1.8,1.8 0 0 0 -2.2,2.3 a1,1 0 0 0 0.5,1.8 z" fill="#fff" stroke="#a0a0a0" stroke-width="0.5"/>
<circle cx="480.90999999999997" cy="170.7" r="1.6" fill="none" stroke="#a0a0a0" stroke-width="0.5"/><line x1="483.21" y1="170.70" x2="484.21" y2="170.70" stroke="#a0a0a0" stroke-width="0.45"/><line x1="482.54" y1="172.33" x2="483.24" y2="173.03" stroke="#a0a0a0" stroke-width="0.45"/><line x1="480.91" y1="173.00" x2="480.91" y2="174.00" stroke="#a0a0a0" stroke-width="0.45"/><line x1="479.28" y1="172.33" x2="478.58" y2="173.03" stroke="#a0a0a0" stroke-width="0.45"/><line x1="478.61" y1="170.70" x2="477.61" y2="170.70" stroke="#a0a0a0" stroke-width="0.45"/><line x1="479.28" y1="169.07" x2="478.58" y2="168.37" stroke="#a0a0a0" stroke-width="0.45"/><line x1="480.91" y1="168.40" x2="480.91" y2="167.40" stroke="#a0a0a0" stroke-width="0.45"/><line x1="482.54" y1="169.07" x2="483.24" y2="168.37" stroke="#a0a0a0" stroke-width="0.45"/><path d="M479.90999999999997,175 h6 a1.6,1.6 0 0 0 0.1,-3.2 a2.3,2.3 0 0 0 -4.3,-0.5 a1.6,1.6 0 0 0 -1.9,2 a0.9,0.9 0 0 0 0.1,1.7 z" fill="#fff" stroke="#a0a0a0" stroke-width="0.5"/>
<path d="M493.28999999999996,173 h7 a1.8,1.8 0 0 0 0.2,-3.6 a2.6,2.6 0 0 0 -4.9,-0.9 a1.9,1.9 0 0 0 -2.5,2.4 a1.1,1.1 0 0 0 0.2,2.1 z" fill="none" stroke="#a0a0a0" stroke-width="0.5"/><line x1="494.69" y1="174.4" x2="494.69" y2="175.3" stroke="#a0a0a0" stroke-width="0.6"/><line x1="496.19" y1="174.4" x2="496.19" y2="175.3" stroke="#a0a0a0" stroke-width="0.6"/><line x1="497.69" y1="174.4" x2="497.69" y2="175.3" stroke="#a0a0a0" stroke-width="0.6"/><line x1="499.19" y1="174.4" x2="499.19" y2="175.3" stroke="#a0a0a0" stroke-width="0.6"/>
<circle cx="511.27" cy="172" r="2.1" fill="none" stroke="#a0a0a0" stroke-width="0.55"/><line x1="514.37" y1="172.00" x2="516.07" y2="172.00" stroke="#a0a0a0" stroke-width="0.5"/><line x1="513.46" y1="174.19" x2="514.66" y2="175.39" stroke="#a0a0a0" stroke-width="0.5"/><line x1="511.27" y1="175.10" x2="511.27" y2="176.80" stroke="#a0a0a0" stroke-width="0.5"/><line x1="509.08" y1="174.19" x2="507.88" y2="175.39" stroke="#a0a0a0" stroke-width="0.5"/><line x1="508.17" y1="172.00" x2="506.47" y2="172.00" stroke="#a0a0a0" stroke-width="0.5"/><line x1="509.08" y1="169.81" x2="507.88" y2="168.61" stroke="#a0a0a0" stroke-width="0.5"/><line x1="511.27" y1="168.90" x2="511.27" y2="167.20" stroke="#a0a0a0" stroke-width="0.5"/><line x1="513.46" y1="169.81" x2="514.66" y2="168.61" stroke="#a0a0a0" stroke-width="0.5"/>
<path d="M522.05,173 h7 a1.8,1.8 0 0 0 0.2,-3.6 a2.6,2.6 0 0 0 -4.9,-0.9 a1.9,1.9 0 0 0 -2.5,2.4 a1.1,1.1 0 0 0 0.2,2.1 z" fill="none" stroke="#a0a0a0" stroke-width="0.5"/><line x1="523.4499999999999" y1="174.4" x2="523.4499999999999" y2="175.3" stroke="#a0a0a0" stroke-width="0.6"/><line x1="524.9499999999999" y1="174.4" x2="524.9499999999999" y2="175.3" stroke="#a0a0a0" stroke-width="0.6"/><line x1="526.4499999999999" y1="174.4" x2="526.4499999999999" y2="175.3" stroke="#a0a0a0" stroke-width="0.6"/><line x1="527.9499999999999" y1="174.4" x2="527.9499999999999" y2="175.3" stroke="#a0a0a0" stroke-width="0.6"/>
<circle cx="540.03" cy="172" r="2.1" fill="none" stroke="#a0a0a0" stroke-width="0.55"/><line x1="543.13" y1="172.00" x2="544.83" y2="172.00" stroke="#a0a0a0" stroke-width="0.5"/><line x1="542.22" y1="174.19" x2="543.42" y2="175.39" stroke="#a0a0a0" stroke-width="0.5"/><line x1="540.03" y1="175.10" x2="540.03" y2="176.80" stroke="#a0a0a0" stroke-width="0.5"/><line x1="537.84" y1="174.19" x2="536.64" y2="175.39" stroke="#a0a0a0" stroke-width="0.5"/><line x1="536.93" y1="172.00" x2="535.23" y2="172.00" stroke="#a0a0a0" stroke-width="0.5"/><line x1="537.84" y1="169.81" x2="536.64" y2="168.61" stroke="#a0a0a0" stroke-width="0.5"/><line x1="540.03" y1="168.90" x2="540.03" y2="167.20" stroke="#a0a0a0" stroke-width="0.5"/><line x1="542.22" y1="169.81" x2="543.42" y2="168.61" stroke="#a0a0a0" stroke-width="0.5"/>
<circle cx="552.81" cy="170.7" r="1.6" fill="none" stroke="#a0a0a0" stroke-width="0.5"/><line x1="555.11" y1="170.70" x2="556.11" y2="170.70" stroke="#a0a0a0" stroke-width="0.45"/><line x1="554.44" y1="172.33" x2="555.14" y2="173.03" stroke="#a0a0a0" stroke-width="0.45"/><line x1="552.81" y1="173.00" x2="552.81" y2="174.00" stroke="#a0a0a0" stroke-width="0.45"/><line x1="551.18" y1="172.33" x2="550.48" y2="173.03" stroke="#a0a0a0" stroke-width="0.45"/><line x1="550.51" y1="170.70" x2="549.51" y2="170.70" stroke="#a0a0a0" stroke-width="0.45"/><line x1="551.18" y1="169.07" x2="550.48" y2="168.37" stroke="#a0a0a0" stroke-width="0.45"/><line x1="552.81" y1="168.40" x2="552.81" y2="167.40" stroke="#a0a0a0" stroke-width="0.45"/><line x1="554.44" y1="169.07" x2="555.14" y2="168.37" stroke="#a0a0a0" stroke-width="0.45"/><path d="M551.81,175 h6 a1.6,1.6 0 0 0 0.1,-3.2 a2.3,2.3 0 0 0 -4.3,-0.5 a1.6,1.6 0 0 0 -1.9,2 a0.9,0.9 0 0 0 0.1,1.7 z" fill="#fff" stroke="#a0a0a0" stroke-width="0.5"/>
<circle cx="567.1899999999999" cy="170.7" r="1.6" fill="none" stroke="#a0a0a0" stroke-width="0.5"/><line x1="569.49" y1="170.70" x2="570.49" y2="170.70" stroke="#a0a0a0" stroke-width="0.45"/><line x1="568.82" y1="172.33" x2="569.52" y2="173.03" stroke="#a0a0a0" stroke-width="0.45"/><line x1="567.19" y1="173.00" x2="567.19" y2="174.00" stroke="#a0a0a0" stroke-width="0.45"/><line x1="565.56" y1="172.33" x2="564.86" y2="173.03" stroke="#a0a0a0" stroke-width="0.45"/><line x1="564.89" y1="170.70" x2="563.89" y2="170.70" stroke="#a0a0a0" stroke-width="0.45"/><line x1="565.56" y1="169.07" x2="564.86" y2="168.37" stroke="#a0a0a0" stroke-width="0.45"/><line x1="567.19" y1="168.40" x2="567.19" y2="167.40" stroke="#a0a0a0" stroke-width="0.45"/><line x1="568.82" y1="169.07" x2="569.52" y2="168.37" stroke="#a0a0a0" stroke-width="0.45"/><path d="M566.1899999999999,175 h6 a1.6,1.6 0 0 0 0.1,-3.2 a2.3,2.3 0 0 0 -4.3,-0.5 a1.6,1.6 0 0 0 -1.9,2 a0.9,0.9 0 0 0 0.1,1.7 z" fill="#fff" stroke="#a0a0a0" stroke-width="0.5"/>
<circle cx="581.5699999999999" cy="170.7" r="1.6" fill="none" stroke="#a0a0a0" stroke-width="0.5"/><line x1="583.87" y1="170.70" x2="584.87" y2="170.70" stroke="#a0a0a0" stroke-width="0.45"/><line x1="583.20" y1="172.33" x2="583.90" y2="173.03" stroke="#a0a0a0" stroke-width="0.45"/><line x1="581.57" y1="173.00" x2="581.57" y2="174.00" stroke="#a0a0a0" stroke-width="0.45"/><line x1="579.94" y1="172.33" x2="579.24" y2="173.03" stroke="#a0a0a0" stroke-width="0.45"/><line x1="579.27" y1="170.70" x2="578.27" y2="170.70" stroke="#a0a0a0" stroke-width="0.45"/><line x1="579.94" y1="169.07" x2="579.24" y2="168.37" stroke="#a0a0a0" stroke-width="0.45"/><line x1="581.57" y1="168.40" x2="581.57" y2="167.40" stroke="#a0a0a0" stroke-width="0.45"/><line x1="583.20" y1="169.07" x2="583.90" y2="168.37" stroke="#a0a0a0" stroke-width="0.45"/><path d="M580.5699999999999,175 h6 a1.6,1.6 0 0 0 0.1,-3.2 a2.3,2.3 0 0 0 -4.3,-0.5 a1.6,1.6 0 0 0 -1.9,2 a0.9,0.9 0 0 0 0.1,1.7 z" fill="#fff" stroke="#a0a0a0" stroke-width="0.5"/>
<circle cx="595.9499999999999" cy="170.7" r="1.6" fill="none" stroke="#a0a0a0" stroke-width="0.5"/><line x1="598.25" y1="170.70" x2="599.25" y2="170.70" stroke="#a0a0a0" stroke-width="0.45"/><line x1="597.58" y1="172.33" x2="598.28" y2="173.03" stroke="#a0a0a0" stroke-width="0.45"/><line x1="595.95" y1="173.00" x2="595.95" y2="174.00" stroke="#a0a0a0" stroke-width="0.45"/><line x1="594.32" y1="172.33" x2="593.62" y2="173.03" stroke="#a0a0a0" stroke-width="0.45"/><line x1="593.65" y1="170.70" x2="592.65" y2="170.70" stroke="#a0a0a0" stroke-width="0.45"/><line x1="594.32" y1="169.07" x2="593.62" y2="168.37" stroke="#a0a0a0" stroke-width="0.45"/><line x1="595.95" y1="168.40" x2="595.95" y2="167.40" stroke="#a0a0a0" stroke-width="0.45"/><line x1="597.58" y1="169.07" x2="598.28" y2="168.37" stroke="#a0a0a0" stroke-width="0.45"/><path d="M594.9499999999999,175 h6 a1.6,1.6 0 0 0 0.1,-3.2 a2.3,2.3 0 0 0 -4.3,-0.5 a1.6,1.6 0 0 0 -1.9,2 a0.9,0.9 0 0 0 0.1,1.7 z" fill="#fff" stroke="#a0a0a0" stroke-width="0.5"/>
<circle cx="611.93" cy="172" r="2.1" fill="none" stroke="#a0a0a0" stroke-width="0.55"/><line x1="615.03" y1="172.00" x2="616.73" y2="172.00" stroke="#a0a0a0" stroke-width="0.5"/><line x1="614.12" y1="174.19" x2="615.32" y2="175.39" stroke="#a0a0a0" stroke-width="0.5"/><line x1="611.93" y1="175.10" x2="611.93" y2="176.80" stroke="#a0a0a0" stroke-width="0.5"/><line x1="609.74" y1="174.19" x2="608.54" y2="175.39" stroke="#a0a0a0" stroke-width="0.5"/><line x1="608.83" y1="172.00" x2="607.13" y2="172.00" stroke="#a0a0a0" stroke-width="0.5"/><line x1="609.74" y1="169.81" x2="608.54" y2="168.61" stroke="#a0a0a0" stroke-width="0.5"/><line x1="611.93" y1="168.90" x2="611.93" y2="167.20" stroke="#a0a0a0" stroke-width="0.5"/><line x1="614.12" y1="169.81" x2="615.32" y2="168.61" stroke="#a0a0a0" stroke-width="0.5"/>
<circle cx="626.31" cy="172" r="2.1" fill="none" stroke="#a0a0a0" stroke-width="0.55"/><line x1="629.41" y1="172.00" x2="631.11" y2="172.00" stroke="#a0a0a0" stroke-width="0.5"/><line x1="628.50" y1="174.19" x2="629.70" y2="175.39" stroke="#a0a0a0" stroke-width="0.5"/><line x1="626.31" y1="175.10" x2="626.31" y2="176.80" stroke="#a0a0a0" stroke-width="0.5"/><line x1="624.12" y1="174.19" x2="622.92" y2="175.39" stroke="#a0a0a0" stroke-width="0.5"/><line x1="623.21" y1="172.00" x2="621.51" y2="172.00" stroke="#a0a0a0" stroke-width="0.5"/><line x1="624.12" y1="169.81" x2="622.92" y2="168.61" stroke="#a0a0a0" stroke-width="0.5"/><line x1="626.31" y1="168.90" x2="626.31" y2="167.20" stroke="#a0a0a0" stroke-width="0.5"/><line x1="628.50" y1="169.81" x2="629.70" y2="168.61" stroke="#a0a0a0" stroke-width="0.5"/>
<path d="M637.09,173 h7 a1.8,1.8 0 0 0 0.2,-3.6 a2.6,2.6 0 0 0 -4.9,-0.9 a1.9,1.9 0 0 0 -2.5,2.4 a1.1,1.1 0 0 0 0.2,2.1 z" fill="none" stroke="#a0a0a0" stroke-width="0.5"/><line x1="638.49" y1="174.4" x2="638.49" y2="175.3" stroke="#a0a0a0" stroke-width="0.6"/><line x1="639.99" y1="174.4" x2="639.99" y2="175.3" stroke="#a0a0a0" stroke-width="0.6"/><line x1="641.49" y1="174.4" x2="641.49" y2="175.3" stroke="#a0a0a0" stroke-width="0.6"/><line x1="642.99" y1="174.4" x2="642.99" y2="175.3" stroke="#a0a0a0" stroke-width="0.6"/>
<circle cx="653.47" cy="170.7" r="1.6" fill="none" stroke="#a0a0a0" stroke-width="0.5"/><line x1="655.77" y1="170.70" x2="656.77" y2="170.70" stroke="#a0a0a0" stroke-width="0.45"/><line x1="655.10" y1="172.33" x2="655.80" y2="173.03" stroke="#a0a0a0" stroke-width="0.45"/><line x1="653.47" y1="173.00" x2="653.47" y2="174.00" stroke="#a0a0a0" stroke-width="0.45"/><line x1="651.84" y1="172.33" x2="651.14" y2="173.03" stroke="#a0a0a0" stroke-width="0.45"/><line x1="651.17" y1="170.70" x2="650.17" y2="170.70" stroke="#a0a0a0" stroke-width="0.45"/><line x1="651.84" y1="169.07" x2="651.14" y2="168.37" stroke="#a0a0a0" stroke-width="0.45"/><line x1="653.47" y1="168.40" x2="653.47" y2="167.40" stroke="#a0a0a0" stroke-width="0.45"/><line x1="655.10" y1="169.07" x2="655.80" y2="168.37" stroke="#a0a0a0" stroke-width="0.45"/><path d="M652.47,175 h6 a1.6,1.6 0 0 0 0.1,-3.2 a2.3,2.3 0 0 0 -4.3,-0.5 a1.6,1.6 0 0 0 -1.9,2 a0.9,0.9 0 0 0 0.1,1.7 z" fill="#fff" stroke="#a0a0a0" stroke-width="0.5"/>
<circle cx="667.85" cy="170.7" r="1.6" fill="none" stroke="#a0a0a0" stroke-width="0.5"/><line x1="670.15" y1="170.70" x2="671.15" y2="170.70" stroke="#a0a0a0" stroke-width="0.45"/><line x1="669.48" y1="172.33" x2="670.18" y2="173.03" stroke="#a0a0a0" stroke-width="0.45"/><line x1="667.85" y1="173.00" x2="667.85" y2="174.00" stroke="#a0a0a0" stroke-width="0.45"/><line x1="666.22" y1="172.33" x2="665.52" y2="173.03" stroke="#a0a0a0" stroke-width="0.45"/><line x1="665.55" y1="170.70" x2="664.55" y2="170.70" stroke="#a0a0a0" stroke-width="0.45"/><line x1="666.22" y1="169.07" x2="665.52" y2="168.37" stroke="#a0a0a0" stroke-width="0.45"/><line x1="667.85" y1="168.40" x2="667.85" y2="167.40" stroke="#a0a0a0" stroke-width="0.45"/><line x1="669.48" y1="169.07" x2="670.18" y2="168.37" stroke="#a0a0a0" stroke-width="0.45"/><path d="M666.85,175 h6 a1.6,1.6 0 0 0 0.1,-3.2 a2.3,2.3 0 0 0 -4.3,-0.5 a1.6,1.6 0 0 0 -1.9,2 a0.9,0.9 0 0 0 0.1,1.7 z" fill="#fff" stroke="#a0a0a0" stroke-width="0.5"/>
<circle cx="683.83" cy="172" r="2.1" fill="none" stroke="#a0a0a0" stroke-width="0.55"/><line x1="686.93" y1="172.00" x2="688.63" y2="172.00" stroke="#a0a0a0" stroke-width="0.5"/><line x1="686.02" y1="174.19" x2="687.22" y2="175.39" stroke="#a0a0a0" stroke-width="0.5"/><line x1="683.83" y1="175.10" x2="683.83" y2="176.80" stroke="#a0a0a0" stroke-width="0.5"/><line x1="681.64" y1="174.19" x2="680.44" y2="175.39" stroke="#a0a0a0" stroke-width="0.5"/><line x1="680.73" y1="172.00" x2="679.03" y2="172.00" stroke="#a0a0a0" stroke-width="0.5"/><line x1="681.64" y1="169.81" x2="680.44" y2="168.61" stroke="#a0a0a0" stroke-width="0.5"/><line x1="683.83" y1="168.90" x2="683.83" y2="167.20" stroke="#a0a0a0" stroke-width="0.5"/><line x1="686.02" y1="169.81" x2="687.22" y2="168.61" stroke="#a0a0a0" stroke-width="0.5"/>
<text x="218" y="271.8" font-size="3.9" fill="#b8b8b8">0K</text>
<text x="218" y="250.1" font-size="3.9" fill="#b8b8b8">20K</text>
<text x="218" y="228.4" font-size="3.9" fill="#b8b8b8">40K</text>
<text x="218" y="206.8" font-size="3.9" fill="#b8b8b8">60K</text>
<text x="218" y="185.1" font-size="3.9" fill="#b8b8b8">80K</text>
<text x="218" y="163.4" font-size="3.9" fill="#b8b8b8">100K</text>
<text x="696" y="271.6" font-size="3.9" fill="#b8b8b8">0K</text>
<text x="696" y="249.9" font-size="3.9" fill="#b8b8b8">50K</text>
<text x="696" y="228.3" font-size="3.9" fill="#b8b8b8">100K</text>
<text x="696" y="206.6" font-size="3.9" fill="#b8b8b8">150K</text>
<text x="696" y="185.0" font-size="3.9" fill="#b8b8b8">200K</text>
<text x="696" y="163.3" font-size="3.9" fill="#b8b8b8">250K</text>
<text transform="translate(214.5,220) rotate(-90)" font-size="4" fill="#b8b8b8" text-anchor="middle">Footfall</text>
<text transform="translate(709,218) rotate(90)" font-size="4.2" fill="#b8b8b8" text-anchor="middle">Outside Traffic</text>
<text x="247.3" y="288" font-size="4.1" fill="#b8b8b8" text-anchor="middle">01 Jan 2024</text>
<text x="338.9" y="288" font-size="4.1" fill="#b8b8b8" text-anchor="middle">08 Jan 2024</text>
<text x="430.5" y="288" font-size="4.1" fill="#b8b8b8" text-anchor="middle">15 Jan 2024</text>
<text x="522.1" y="288" font-size="4.1" fill="#b8b8b8" text-anchor="middle">22 Jan 2024</text>
<text x="613.7" y="288" font-size="4.1" fill="#b8b8b8" text-anchor="middle">29 Jan 2024</text>
<text x="208.2" y="140.9" font-size="4.9" fill="#666">Daily Footfall</text>
<circle cx="242.9" cy="137.2" r="2.1" fill="none" stroke="#aaa" stroke-width="0.45"/>
<line x1="242.9" y1="136.8" x2="242.9" y2="138.3" stroke="#aaa" stroke-width="0.45"/><circle cx="242.9" cy="136.1" r="0.3" fill="#aaa"/>
<rect x="599" y="142.8" width="3.8" height="3.8" fill="#3e6fc8"/>
<text x="605.6" y="146.2" font-size="4.35" fill="#aaa">Footfall (Adult)</text>
<rect x="639.6" y="142.8" width="3.8" height="3.8" fill="#a4c2ee"/>
<text x="646" y="146.2" font-size="4.35" fill="#aaa">Footfall (Child)</text>
<path d="M680,143.2 h4 M680.5,144.3 h3 l-0.5,2.2 h-2 z" fill="#bfe9e4" stroke="#3fc0b4" stroke-width="0.4"/>
<text x="686.5" y="146.2" font-size="4.35" fill="#aaa">Outside Traffic</text>
</svg>
<!-- /DAILY -->
<!-- BOTTOM -->
<svg class="a" style="left:0;top:0" width="726" height="411" viewBox="0 0 726 411">
<text x="207.2" y="309.6" font-size="5" fill="#555">Footfall Profile</text>
<circle cx="245.1" cy="306.2" r="2.1" fill="none" stroke="#aaa" stroke-width="0.45"/>
<line x1="245.1" y1="305.8" x2="245.1" y2="307.3" stroke="#aaa" stroke-width="0.45"/><circle cx="245.1" cy="305.1" r="0.3" fill="#aaa"/>
<text x="207.2" y="323.1" font-size="5" fill="#444">The daily average footfall is <tspan fill="#2f6fe0">40.2K</tspan> for Weekday and <tspan fill="#2f6fe0">51.2K</tspan> for Weekend &amp; Public Holiday.</text>
<text x="271.6" y="336.6" font-size="4.2" fill="#666" text-anchor="middle">Weekday</text>
<circle cx="285.6" cy="334.6" r="2" fill="none" stroke="#aaa" stroke-width="0.45"/>
<line x1="285.6" y1="334.2" x2="285.6" y2="335.7" stroke="#aaa" stroke-width="0.45"/><circle cx="285.6" cy="333.5" r="0.3" fill="#aaa"/>
<text x="398.2" y="336.1" font-size="4.4" fill="#666" text-anchor="middle">Weekend &amp; Public Holiday</text>
<circle cx="428.6" cy="334.2" r="2" fill="none" stroke="#aaa" stroke-width="0.45"/>
<line x1="428.6" y1="333.8" x2="428.6" y2="335.3" stroke="#aaa" stroke-width="0.45"/><circle cx="428.6" cy="333.1" r="0.3" fill="#aaa"/>
<text x="220" y="388.2" font-size="3.9" fill="#b8b8b8" text-anchor="end">0</text>
<text x="220" y="373.2" font-size="3.9" fill="#b8b8b8" text-anchor="end">25</text>
<text x="220" y="358.3" font-size="3.9" fill="#b8b8b8" text-anchor="end">50</text>
<text x="220" y="343.4" font-size="3.9" fill="#b8b8b8" text-anchor="end">75</text>
<line x1="223.3" y1="357.3" x2="328" y2="357.3" stroke="#eeeeee" stroke-width="0.5"/>
<path d="M223.3,346.1 C225.5,347.3 231.9,351.8 236.7,353.2 C241.5,354.6 247.7,353.6 251.9,354.5 C256.1,355.4 258.3,357.1 262,358.5 C265.7,359.9 269.9,362.1 274.3,363.1 C278.7,364.1 285.2,362.7 288.6,364.5 C292.1,366.3 292.9,371.3 295,374 C297.1,376.7 299.0,380.4 301.2,380.6 C303.4,380.8 305.6,377.6 308,375 C310.4,372.4 312.2,368.5 315.5,365.2 C318.8,361.9 325.9,356.7 328,355 L328,386.7 L223.3,386.7 Z" fill="#c3d8f3"/>
<path d="M223.3,346.1 C225.5,347.3 231.9,351.8 236.7,353.2 C241.5,354.6 247.7,353.6 251.9,354.5 C256.1,355.4 258.3,357.1 262,358.5 C265.7,359.9 269.9,362.1 274.3,363.1 C278.7,364.1 285.2,362.7 288.6,364.5 C292.1,366.3 292.9,371.3 295,374 C297.1,376.7 299.0,380.4 301.2,380.6 C303.4,380.8 305.6,377.6 308,375 C310.4,372.4 312.2,368.5 315.5,365.2 C318.8,361.9 325.9,356.7 328,355" fill="none" stroke="#7aa6e3" stroke-width="0.6"/>
<text transform="translate(212.10000000000002,358) rotate(-90)" font-size="4" fill="#b8b8b8" text-anchor="middle">Footfall</text>
<text x="346" y="388.2" font-size="3.9" fill="#b8b8b8" text-anchor="end">0</text>
<text x="346" y="373.2" font-size="3.9" fill="#b8b8b8" text-anchor="end">25</text>
<text x="346" y="358.3" font-size="3.9" fill="#b8b8b8" text-anchor="end">50</text>
<text x="346" y="343.4" font-size="3.9" fill="#b8b8b8" text-anchor="end">75</text>
<line x1="349.7" y1="357.3" x2="453.5" y2="357.3" stroke="#eeeeee" stroke-width="0.5"/>
<path d="M349.7,352.3 C350.4,351.8 352.5,349.9 354,349 C355.5,348.1 356.6,347.3 358.6,347 C360.6,346.7 363.9,346.7 365.8,347.3 C367.7,347.9 368.2,349.2 370,350.5 C371.8,351.8 373.9,353.6 376.6,355 C379.3,356.4 382.7,357.6 386,358.8 C389.3,360.0 391.2,361.6 396.2,362.2 C401.2,362.8 412.7,362.2 416,362.2 C418,365 424,376 427.6,384.2 L433.8,384.2 L441,385.4 L453.5,386.3 L453.5,386.7 L349.7,386.7 Z" fill="#c3d8f3"/>
<path d="M349.7,352.3 C350.4,351.8 352.5,349.9 354,349 C355.5,348.1 356.6,347.3 358.6,347 C360.6,346.7 363.9,346.7 365.8,347.3 C367.7,347.9 368.2,349.2 370,350.5 C371.8,351.8 373.9,353.6 376.6,355 C379.3,356.4 382.7,357.6 386,358.8 C389.3,360.0 391.2,361.6 396.2,362.2 C401.2,362.8 412.7,362.2 416,362.2 C418,365 424,376 427.6,384.2 L433.8,384.2 L441,385.4 L453.5,386.3" fill="none" stroke="#7aa6e3" stroke-width="0.6"/>
<text transform="translate(338.1,358) rotate(-90)" font-size="4" fill="#b8b8b8" text-anchor="middle">Footfall</text>
<text x="229" y="393.1" font-size="3.9" fill="#b8b8b8" text-anchor="middle">10:00</text>
<text x="251.9" y="393.1" font-size="3.9" fill="#b8b8b8" text-anchor="middle">12:00</text>
<text x="273.8" y="393.1" font-size="3.9" fill="#b8b8b8" text-anchor="middle">14:00</text>
<text x="295.8" y="393.1" font-size="3.9" fill="#b8b8b8" text-anchor="middle">16:00</text>
<text x="319" y="393.1" font-size="3.9" fill="#b8b8b8" text-anchor="middle">18:00</text>
<text x="353.6" y="393.1" font-size="3.9" fill="#b8b8b8" text-anchor="middle">10:00</text>
<text x="377.4" y="393.1" font-size="3.9" fill="#b8b8b8" text-anchor="middle">12:00</text>
<text x="399.8" y="393.1" font-size="3.9" fill="#b8b8b8" text-anchor="middle">14:00</text>
<text x="421.7" y="393.1" font-size="3.9" fill="#b8b8b8" text-anchor="middle">16:00</text>
<text x="444.6" y="393.1" font-size="3.9" fill="#b8b8b8" text-anchor="middle">18:00</text>
<text x="467.9" y="309" font-size="5" fill="#555">Avg. Visit Duration</text>
<circle cx="515" cy="305.5" r="2.1" fill="none" stroke="#aaa" stroke-width="0.45"/>
<line x1="515.0" y1="305.1" x2="515.0" y2="306.6" stroke="#aaa" stroke-width="0.45"/><circle cx="515.0" cy="304.4" r="0.3" fill="#aaa"/>
<text x="509.1" y="324.8" font-size="4.2" fill="#555" text-anchor="middle">Weekday</text>
<circle cx="523.3" cy="322.8" r="2" fill="none" stroke="#aaa" stroke-width="0.45"/>
<line x1="523.3" y1="322.4" x2="523.3" y2="323.9" stroke="#aaa" stroke-width="0.45"/><circle cx="523.3" cy="321.7" r="0.3" fill="#aaa"/>
<text x="590.8" y="325.3" font-size="4.4" fill="#555" text-anchor="middle">Weekend &amp; Public Holiday</text>
<circle cx="622.2" cy="323.2" r="2" fill="none" stroke="#aaa" stroke-width="0.45"/>
<line x1="622.2" y1="322.8" x2="622.2" y2="324.3" stroke="#aaa" stroke-width="0.45"/><circle cx="622.2" cy="322.1" r="0.3" fill="#aaa"/>
<path d="M489.83,341.62 A28.7,28.7 0 0 1 502.97,331.26 L508.06,344.30 A14.7,14.7 0 0 0 501.33,349.61 Z" fill="#3f6fc9" stroke="#fff" stroke-width="0.6"/>
<text x="500.1" y="342.7" font-size="4.4" fill="#fff" text-anchor="middle">17%</text>
<path d="M502.97,331.26 A28.7,28.7 0 0 1 523.22,331.03 L518.43,344.19 A14.7,14.7 0 0 0 508.06,344.30 Z" fill="#dae4f5" stroke="#fff" stroke-width="0.6"/>
<text x="513.2" y="338.1" font-size="4.4" fill="#fff" text-anchor="middle">11%</text>
<path d="M523.22,331.03 A28.7,28.7 0 0 1 541.96,355.20 L528.03,356.57 A14.7,14.7 0 0 0 518.43,344.19 Z" fill="#b3c8ee" stroke="#fff" stroke-width="0.6"/>
<text x="530.4" y="346.4" font-size="4.4" fill="#fff" text-anchor="middle">17%</text>
<path d="M541.96,355.20 A28.7,28.7 0 0 1 533.80,378.19 L523.85,368.34 A14.7,14.7 0 0 0 528.03,356.57 Z" fill="#94b0e6" stroke="#fff" stroke-width="0.6"/>
<text x="533.7" y="366.8" font-size="4.4" fill="#fff" text-anchor="middle">15%</text>
<path d="M533.80,378.19 A28.7,28.7 0 0 1 489.83,341.62 L501.33,349.61 A14.7,14.7 0 0 0 523.85,368.34 Z" fill="#6f94dc" stroke="#fff" stroke-width="0.6"/>
<text x="499.7" y="376.1" font-size="4.4" fill="#fff" text-anchor="middle">66%</text>
<path d="M570.88,341.83 A28.7,28.7 0 0 1 585.57,331.30 L589.73,344.67 A14.7,14.7 0 0 0 582.21,350.06 Z" fill="#3f6fc9" stroke="#fff" stroke-width="0.6"/>
<text x="581.6" y="342.8" font-size="4.4" fill="#fff" text-anchor="middle">17%</text>
<path d="M585.57,331.30 A28.7,28.7 0 0 1 603.63,331.63 L598.98,344.83 A14.7,14.7 0 0 0 589.73,344.67 Z" fill="#dae4f5" stroke="#fff" stroke-width="0.6"/>
<text x="594.5" y="338.8" font-size="4.4" fill="#fff" text-anchor="middle">11%</text>
<path d="M603.63,331.63 A28.7,28.7 0 0 1 622.55,354.95 L608.67,356.78 A14.7,14.7 0 0 0 598.98,344.83 Z" fill="#b3c8ee" stroke="#fff" stroke-width="0.6"/>
<text x="610.8" y="346.8" font-size="4.4" fill="#fff" text-anchor="middle">17%</text>
<path d="M622.55,354.95 A28.7,28.7 0 0 1 616.72,376.37 L605.68,367.75 A14.7,14.7 0 0 0 608.67,356.78 Z" fill="#94b0e6" stroke="#fff" stroke-width="0.6"/>
<text x="614.8" y="366.0" font-size="4.4" fill="#fff" text-anchor="middle">15%</text>
<path d="M616.72,376.37 A28.7,28.7 0 0 1 570.88,341.83 L582.21,350.06 A14.7,14.7 0 0 0 605.68,367.75 Z" fill="#6f94dc" stroke="#fff" stroke-width="0.6"/>
<text x="581.2" y="377.5" font-size="4.4" fill="#fff" text-anchor="middle">66%</text>
<rect x="652.6" y="335.4" width="3.6" height="3.6" fill="#dae4f5"/>
<text x="658.8" y="338.7" font-size="4.3" fill="#a0a0a0">0-5 mins</text>
<rect x="652.6" y="344.1" width="3.6" height="3.6" fill="#b3c8ee"/>
<text x="658.8" y="347.4" font-size="4.3" fill="#a0a0a0">5-15 mins</text>
<rect x="652.6" y="352.9" width="3.6" height="3.6" fill="#94b0e6"/>
<text x="658.8" y="356.2" font-size="4.3" fill="#a0a0a0">15-30 mins</text>
<rect x="652.6" y="361.6" width="3.6" height="3.6" fill="#6f94dc"/>
<text x="658.8" y="364.9" font-size="4.3" fill="#a0a0a0">30-60 mins</text>
<rect x="652.6" y="370.4" width="3.6" height="3.6" fill="#3f6fc9"/>
<text x="658.8" y="373.7" font-size="4.3" fill="#a0a0a0">&gt; 60 mins</text>
</svg>
<!-- /BOTTOM -->
</body></html>
